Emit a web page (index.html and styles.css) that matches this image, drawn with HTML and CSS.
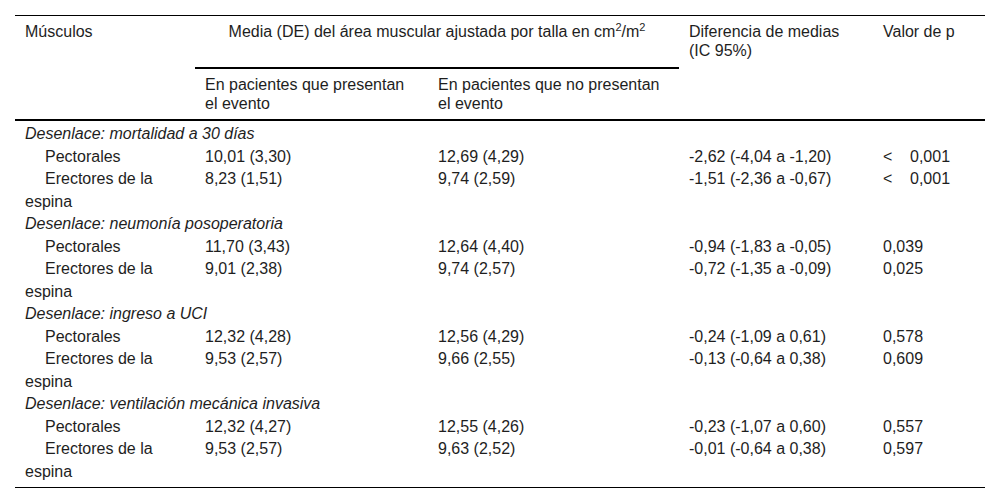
FILE: index.html
```html
<!DOCTYPE html>
<html lang="es">
<head>
<meta charset="utf-8">
<title>Tabla</title>
<link rel="stylesheet" href="styles.css">
</head>
<body>
<table class="data">
  <colgroup>
    <col class="c1"><col class="c2"><col class="c3"><col class="c4"><col class="c5">
  </colgroup>
  <thead>
    <tr>
      <th rowspan="2">Músculos</th>
      <th colspan="2" class="span">Media (DE) del área muscular ajustada por talla en cm<sup>2</sup>/m<sup>2</sup></th>
      <th rowspan="2">Diferencia de medias<br>(IC 95%)</th>
      <th rowspan="2">Valor de p</th>
    </tr>
    <tr>
      <th class="sub">En pacientes que presentan<br>el evento</th>
      <th class="sub">En pacientes que no presentan<br>el evento</th>
    </tr>
  </thead>
  <tbody>
    <tr class="group first"><td colspan="5">Desenlace: mortalidad a 30 días</td></tr>
    <tr><td class="m">Pectorales</td><td>10,01 (3,30)</td><td>12,69 (4,29)</td><td>-2,62 (-4,04 a -1,20)</td><td><span class="lt">&lt;</span>0,001</td></tr>
    <tr><td class="m">Erectores de la<br>espina</td><td>8,23 (1,51)</td><td>9,74 (2,59)</td><td>-1,51 (-2,36 a -0,67)</td><td><span class="lt">&lt;</span>0,001</td></tr>
    <tr class="group"><td colspan="5">Desenlace: neumonía posoperatoria</td></tr>
    <tr><td class="m">Pectorales</td><td>11,70 (3,43)</td><td>12,64 (4,40)</td><td>-0,94 (-1,83 a -0,05)</td><td>0,039</td></tr>
    <tr><td class="m">Erectores de la<br>espina</td><td>9,01 (2,38)</td><td>9,74 (2,57)</td><td>-0,72 (-1,35 a -0,09)</td><td>0,025</td></tr>
    <tr class="group"><td colspan="5">Desenlace: ingreso a UCI</td></tr>
    <tr><td class="m">Pectorales</td><td>12,32 (4,28)</td><td>12,56 (4,29)</td><td>-0,24 (-1,09 a 0,61)</td><td>0,578</td></tr>
    <tr><td class="m">Erectores de la<br>espina</td><td>9,53 (2,57)</td><td>9,66 (2,55)</td><td>-0,13 (-0,64 a 0,38)</td><td>0,609</td></tr>
    <tr class="group"><td colspan="5">Desenlace: ventilación mecánica invasiva</td></tr>
    <tr><td class="m">Pectorales</td><td>12,32 (4,27)</td><td>12,55 (4,26)</td><td>-0,23 (-1,07 a 0,60)</td><td>0,557</td></tr>
    <tr class="last"><td class="m">Erectores de la<br>espina</td><td>9,53 (2,57)</td><td>9,63 (2,52)</td><td>-0,01 (-0,64 a 0,38)</td><td>0,597</td></tr>
  </tbody>
</table>
</body>
</html>
```

FILE: styles.css
```css
html, body {
  margin: 0;
  padding: 0;
  background: #fff;
}
body {
  font-family: "Liberation Sans", Arial, sans-serif;
  font-size: 16px;
  color: #1e1e1e;
}
.data {
  margin: 15px 15px 0 15px;
  width: 970px;
  border-collapse: collapse;
  table-layout: fixed;
  border-top: 1px solid #000;
  border-bottom: 1px solid #000;
}
.c1 { width: 180px; }
.c2 { width: 233px; }
.c3 { width: 251px; }
.c4 { width: 194px; }
.c5 { width: 112px; }
.data th {
  font-weight: normal;
  text-align: left;
  vertical-align: top;
  line-height: 19px;
  padding: 6px 10px;
  white-space: nowrap;
}
.data th.span {
  text-align: center;
  border-bottom: 2px solid #000;
  padding: 6px 10px 26px;
}
.data th.sub {
  padding: 6px 10px 6px;
}
.data thead {
  border-bottom: 2px solid #000;
}
.data sup {
  font-size: 11px;
  line-height: 0;
  vertical-align: 6px;
}
.data td {
  line-height: 22.5px;
  padding: 0 10px;
  vertical-align: top;
  white-space: nowrap;
}
.data tr.first td {
  padding-top: 2px;
}
.data tr.last td {
  padding-bottom: 4px;
}
.data .group td {
  font-style: italic;
}
.data td.m {
  text-indent: 20px;
}
.lt {
  display: inline-block;
  width: 27px;
}
```
